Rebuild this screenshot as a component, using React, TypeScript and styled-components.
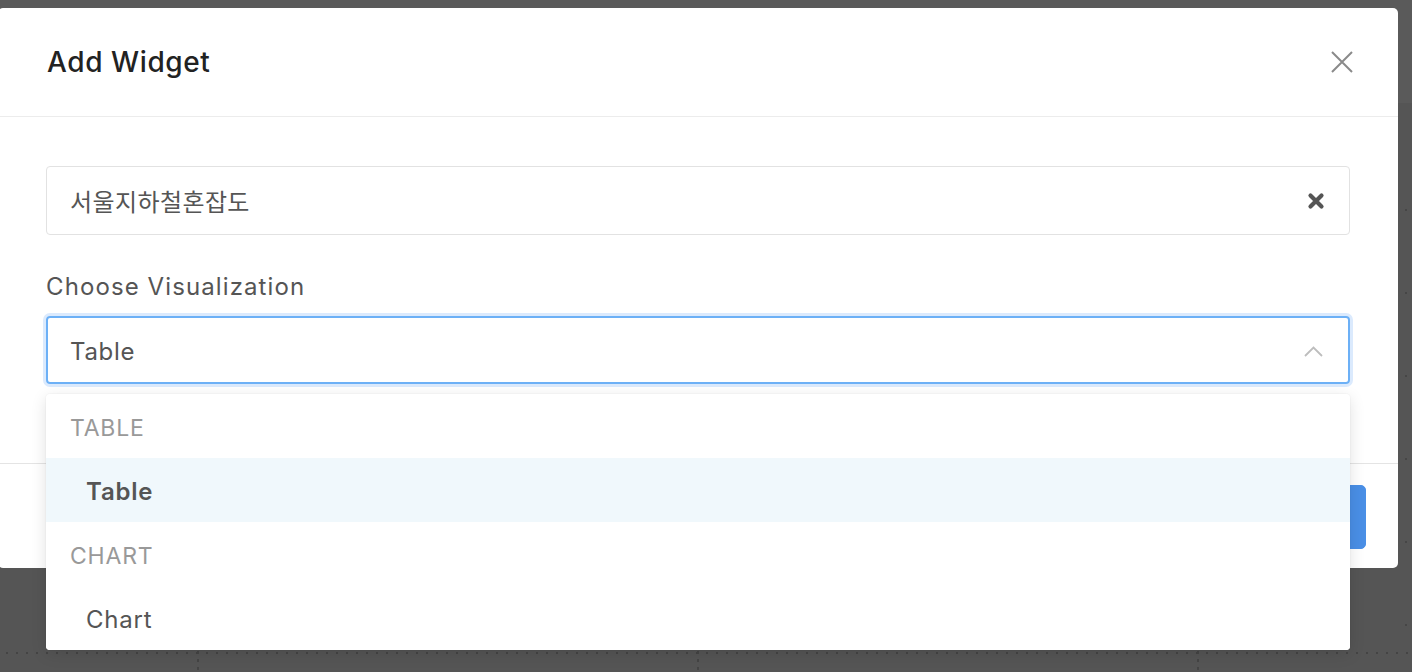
import React from "react";
import styled, { createGlobalStyle } from "styled-components";

const GlobalStyle = createGlobalStyle`
  html, body { margin: 0; padding: 0; }
  body {
    font-family: Inter, "Noto Sans CJK KR", "Noto Sans", sans-serif;
    background: #555555;
    overflow: hidden;
  }
  * { box-sizing: border-box; }
`;

const Backdrop = styled.div`
  position: fixed;
  inset: 0;
  background-color: #555555;
  background-image:
    linear-gradient(90deg, #444 0 2px, transparent 2px 10px),
    repeating-linear-gradient(180deg, #454545 0 3px, transparent 3px 8px),
    repeating-linear-gradient(180deg, #454545 0 3px, transparent 3px 8px),
    repeating-linear-gradient(180deg, #454545 0 3px, transparent 3px 8px),
    linear-gradient(180deg, #5a5a5a 0 103px, transparent 103px),
    repeating-linear-gradient(180deg, #464646 0 2px, transparent 2px 83px);
  background-size: 10px 2px, 2px 24px, 2px 24px, 2px 24px, 100% 103px, 2px 440px;
  background-position: 6px 652px, 197px 651px, 697px 651px, 1197px 651px, 0 0, 1405px 209px;
  background-repeat: repeat-x, no-repeat, no-repeat, no-repeat, no-repeat, no-repeat;
`;

const Overlay = styled.div`
  position: fixed;
  inset: 0;
  padding-top: 8px;
`;

const Modal = styled.div`
  width: 1400px;
  margin-left: -2px;
  background: #ffffff;
  border-radius: 5px;
`;

const Header = styled.header`
  height: 109px;
  display: flex;
  align-items: center;
  justify-content: space-between;
  padding: 0 45px 0 49px;
  border-bottom: 1px solid #ececec;
`;

const Title = styled.h2`
  margin: 0;
  font-size: 28px;
  font-weight: 500;
  color: #222222;
  letter-spacing: 0.6px;
`;

const IconButton = styled.button`
  border: 0;
  background: transparent;
  padding: 0;
  display: flex;
  align-items: center;
  justify-content: center;
  cursor: pointer;
`;

const Body = styled.div`
  padding: 49px 48px 79px;
`;

const SearchField = styled.div`
  height: 69px;
  border: 1px solid #e2e2e2;
  border-radius: 4px;
  display: flex;
  align-items: center;
  justify-content: space-between;
  padding: 0 24px 0 23px;
  font-size: 24px;
  letter-spacing: 0.4px;
  color: #555555;
`;

const Label = styled.div`
  margin-top: 35px;
  font-size: 24px;
  line-height: 34px;
  letter-spacing: 1.1px;
  color: #555555;
`;

const SelectWrap = styled.div`
  position: relative;
  margin-top: 12px;
`;

const SelectBox = styled.div`
  height: 68px;
  border: 2px solid #6cb0f6;
  box-shadow: 0 0 0 3px #dbeafd;
  border-radius: 4px;
  display: flex;
  align-items: center;
  justify-content: space-between;
  padding: 2px 25px 0 22px;
  font-size: 24px;
  letter-spacing: 0.7px;
  color: #555555;
`;

const Menu = styled.div`
  position: absolute;
  top: calc(100% + 10px);
  left: 0;
  right: 0;
  z-index: 10;
  background: #ffffff;
  border-radius: 4px;
  box-shadow: 0 4px 16px rgba(0, 0, 0, 0.12), 0 0 0 1px rgba(0, 0, 0, 0.02);
  overflow: hidden;
`;

const GroupHeader = styled.div`
  height: 64px;
  display: flex;
  align-items: center;
  padding: 3px 0 0 24px;
  font-size: 23px;
  letter-spacing: 0.8px;
  color: #999999;
  text-transform: uppercase;
`;

const Option = styled.div<{ $active?: boolean }>`
  height: 64px;
  display: flex;
  align-items: center;
  padding: 3px 0 0 40px;
  font-size: 24px;
  letter-spacing: 0.8px;
  color: #555555;
  font-weight: ${(p) => (p.$active ? 600 : 400)};
  background: ${(p) => (p.$active ? "#f0f8fc" : "#ffffff")};
`;

const Footer = styled.footer`
  border-top: 1px solid #e4e4e4;
  padding: 21px 32px 19px 48px;
  display: flex;
  justify-content: flex-end;
  gap: 16px;
`;

const Button = styled.button<{ $primary?: boolean }>`
  height: 64px;
  padding: 0 32px;
  border-radius: 5px;
  font-family: inherit;
  font-size: 22px;
  border: 1px solid ${(p) => (p.$primary ? "#4a8fe6" : "#d9d9d9")};
  background: ${(p) => (p.$primary ? "#4a8fe6" : "#ffffff")};
  color: ${(p) => (p.$primary ? "#ffffff" : "#555555")};
`;

const CloseIcon = () => (
  <svg width="22" height="22" viewBox="0 0 22 22">
    <path d="M1 1 L21 21 M21 1 L1 21" stroke="#8a8a8a" strokeWidth="2" fill="none" />
  </svg>
);

const ClearIcon = () => (
  <svg width="18" height="18" viewBox="0 0 18 18">
    <path d="M3.5 3.5 L14.5 14.5 M14.5 3.5 L3.5 14.5" stroke="#555555" strokeWidth="4.2" strokeLinecap="round" fill="none" />
  </svg>
);

const ChevronUp = () => (
  <svg width="19" height="11" viewBox="0 0 19 11">
    <polyline points="1,10 9.5,1.5 18,10" stroke="#bdbdbd" strokeWidth="1.8" fill="none" />
  </svg>
);

export default function App() {
  return (
    <>
      <GlobalStyle />
      <Backdrop />
      <Overlay>
        <Modal>
          <Header>
            <Title>Add Widget</Title>
            <IconButton aria-label="Close">
              <CloseIcon />
            </IconButton>
          </Header>
          <Body>
            <SearchField>
              <span>서울지하철혼잡도</span>
              <ClearIcon />
            </SearchField>
            <Label>Choose Visualization</Label>
            <SelectWrap>
              <SelectBox>
                <span>Table</span>
                <ChevronUp />
              </SelectBox>
              <Menu>
                <GroupHeader>Table</GroupHeader>
                <Option $active>Table</Option>
                <GroupHeader>Chart</GroupHeader>
                <Option>Chart</Option>
              </Menu>
            </SelectWrap>
          </Body>
          <Footer>
            <Button>Cancel</Button>
            <Button $primary>Add to Dashboard</Button>
          </Footer>
        </Modal>
      </Overlay>
    </>
  );
}
